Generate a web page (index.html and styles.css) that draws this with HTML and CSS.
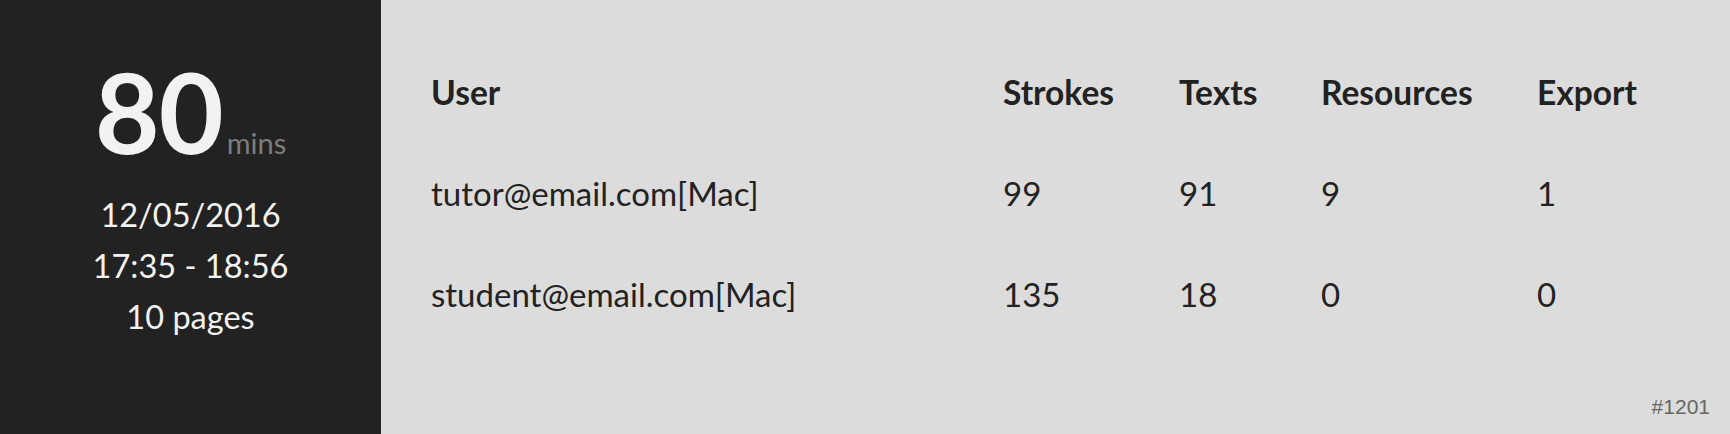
FILE: index.html
```html
<!DOCTYPE html>
<html>
<head>
<meta charset="utf-8">
<link rel="stylesheet" href="styles.css">
</head>
<body>
<div class="card">
  <aside class="summary">
    <div class="duration"><span class="num">80</span><span class="unit">mins</span></div>
    <div class="meta">
      <div>12/05/2016</div>
      <div>17:35 - 18:56</div>
      <div>10 pages</div>
    </div>
  </aside>
  <main class="detail">
    <div class="table">
      <div class="cell head">User</div>
      <div class="cell head">Strokes</div>
      <div class="cell head">Texts</div>
      <div class="cell head">Resources</div>
      <div class="cell head">Export</div>

      <div class="cell">tutor@email.com[Mac]</div>
      <div class="cell">99</div>
      <div class="cell">91</div>
      <div class="cell">9</div>
      <div class="cell">1</div>

      <div class="cell">student@email.com[Mac]</div>
      <div class="cell">135</div>
      <div class="cell">18</div>
      <div class="cell">0</div>
      <div class="cell">0</div>
    </div>
    <div class="id">#1201</div>
  </main>
</div>
</body>
</html>
```

FILE: styles.css
```css
html, body {
  margin: 0;
  padding: 0;
}
body {
  width: 1730px;
  height: 434px;
  font-family: Lato, "Open Sans", sans-serif;
  background: #dcdcdc;
}
.card {
  display: flex;
  height: 434px;
}
.summary {
  width: 381px;
  flex: none;
  background: #222222;
  color: #f2f2f2;
  display: flex;
  flex-direction: column;
  align-items: center;
  padding-top: 55px;
  box-sizing: border-box;
}
.duration {
  line-height: 1;
  white-space: nowrap;
}
.num {
  font-size: 112px;
  font-weight: 700;
  letter-spacing: -1px;
}
.unit {
  font-size: 29px;
  color: #7d7d7d;
  margin-left: 4px;
}
.meta {
  margin-top: 22px;
  font-size: 32.5px;
  line-height: 51px;
  text-align: center;
}
.detail {
  flex: 1;
  display: flex;
  flex-direction: column;
  padding: 42px 20px 15px 50px;
  color: #222222;
}
.table {
  display: grid;
  grid-template-columns: 572px 176px 142px 216px 1fr;
  grid-auto-rows: 101px;
}
.cell {
  font-size: 33px;
  line-height: 101px;
  white-space: nowrap;
}
.head {
  font-weight: 700;
  font-size: 33.5px;
}
.id {
  margin-top: auto;
  text-align: right;
  font-family: "Liberation Sans", Arial, sans-serif;
  font-size: 21px;
  line-height: 24px;
  color: #666666;
}
```
